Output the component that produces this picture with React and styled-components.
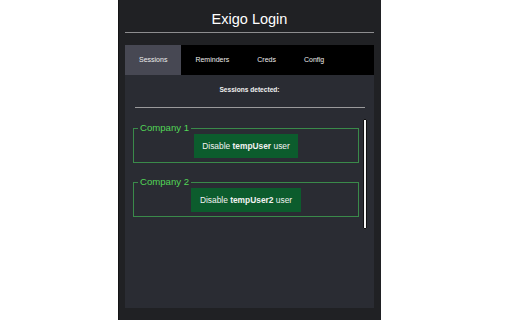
import React, { useState } from "react";
import styled, { createGlobalStyle } from "styled-components";

const GlobalStyle = createGlobalStyle`
  body {
    margin: 0;
    background: #ffffff;
    font-family: "Liberation Sans", Arial, sans-serif;
  }
`;

const sessions = [
  { company: "Company 1", user: "tempUser" },
  { company: "Company 2", user: "tempUser2" },
];

const tabs = ["Sessions", "Reminders", "Creds", "Config"];

const App = () => {
  const [active, setActive] = useState(0);

  return (
    <>
      <GlobalStyle />
      <Page>
        <Popup>
          <Header>Exigo Login</Header>
          <HeaderRule />
          <Panel>
            <TabBar>
              {tabs.map((tab, index) => (
                <Tab
                  key={tab}
                  $active={index === active}
                  onClick={() => setActive(index)}
                >
                  {tab}
                </Tab>
              ))}
            </TabBar>
            <Heading>Sessions detected:</Heading>
            <Divider />
            <ScrollRow>
              <SessionList>
                {sessions.map((s) => (
                  <Company key={s.company}>
                    <Legend>{s.company}</Legend>
                    <DisableButton>
                      Disable <b>{s.user}</b> user
                    </DisableButton>
                  </Company>
                ))}
              </SessionList>
              <ScrollThumb />
            </ScrollRow>
          </Panel>
        </Popup>
      </Page>
    </>
  );
};

export default App;

// styled
const Page = styled.div`
  display: flex;
  height: 320px;
`;

const Popup = styled.div`
  display: flex;
  flex-direction: column;
  width: 263px;
  height: 320px;
  margin-left: 118px;
  padding: 0 7px 12px 6px;
  box-sizing: border-box;
  background: #202124;
  border-left: 1px solid #141416;
`;

const Header = styled.div`
  height: 32px;
  display: flex;
  align-items: center;
  justify-content: center;
  padding-top: 6px;
  box-sizing: border-box;
  color: #ffffff;
  font-size: 14.5px;
`;

const HeaderRule = styled.div`
  height: 1px;
  background: #8d8d8f;
  margin-bottom: 12px;
`;

const Panel = styled.div`
  flex: 1;
  display: flex;
  flex-direction: column;
  background: #2a2c33;
`;

const TabBar = styled.div`
  display: flex;
  height: 30px;
  background: #000000;
`;

const Tab = styled.div`
  padding: 0 14px;
  line-height: 30px;
  font-size: 7px;
  color: #ededed;
  background: ${(p) => (p.$active ? "#474853" : "transparent")};
  cursor: pointer;
`;

const Heading = styled.div`
  padding-top: 10px;
  line-height: 10px;
  text-align: center;
  font-size: 6.6px;
  font-weight: bold;
  color: #f0f0f0;
`;

const Divider = styled.div`
  height: 1px;
  background: #9a9a9c;
  margin: 12px 9px 0 10px;
`;

const ScrollRow = styled.div`
  display: flex;
  align-items: flex-start;
  gap: 4px;
  padding: 11px 0 0 8px;
`;

const SessionList = styled.div`
  width: 226px;
  padding-top: 4px;
  display: flex;
  flex-direction: column;
  gap: 14px;
`;

const Company = styled.fieldset`
  margin: 0;
  padding: 1px 0 4px;
  border: 1px solid #3a8a4a;
  display: flex;
  justify-content: center;
  min-width: 0;
`;

const Legend = styled.legend`
  margin-left: 4px;
  padding: 0 2px;
  font-size: 9.6px;
  line-height: 10px;
  color: #52d657;
`;

const DisableButton = styled.button`
  display: block;
  margin: 0 auto;
  padding: 0 8.5px;
  height: 24px;
  border: 0;
  background: #0c5c2d;
  color: #f2f2f2;
  font-family: "Liberation Sans", Arial, sans-serif;
  font-size: 8.4px;
  cursor: pointer;
`;

const ScrollThumb = styled.div`
  width: 2px;
  height: 108px;
  background: #f4f4f4;
  border: 1px solid #101012;
  border-radius: 1px;
`;
